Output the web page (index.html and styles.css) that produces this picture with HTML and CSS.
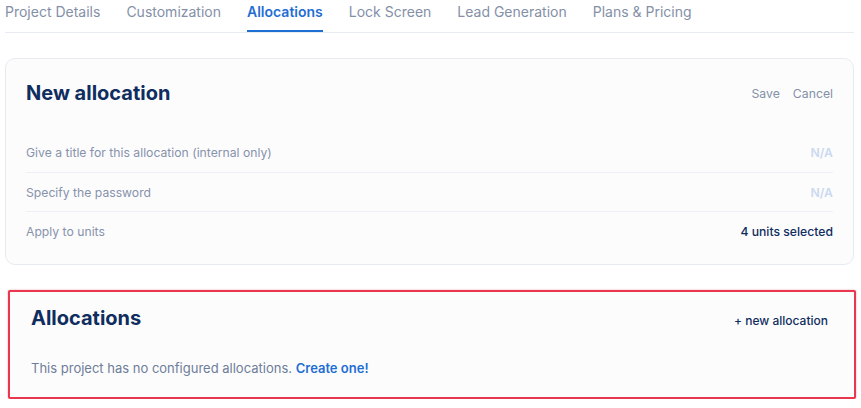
FILE: index.html
```html
<!DOCTYPE html>
<html lang="en">
  <head>
    <meta charset="UTF-8" />
    <title>Allocations</title>
    <link rel="stylesheet" href="styles.css">
  </head>
  <body>
    <nav class="tabs">
      <a class="tab">Project Details</a>
      <a class="tab">Customization</a>
      <a class="tab active">Allocations</a>
      <a class="tab">Lock Screen</a>
      <a class="tab">Lead Generation</a>
      <a class="tab">Plans &amp; Pricing</a>
    </nav>

    <section class="card">
      <div class="card-head">
        <h2>New allocation</h2>
        <div class="actions">
          <a>Save</a>
          <a>Cancel</a>
        </div>
      </div>
      <ul class="rows">
        <li><span class="label">Give a title for this allocation (internal only)</span><span class="value empty">N/A</span></li>
        <li><span class="label">Specify the password</span><span class="value empty">N/A</span></li>
        <li><span class="label">Apply to units</span><span class="value">4 units selected</span></li>
      </ul>
    </section>

    <section class="card list">
      <div class="card-head">
        <h2>Allocations</h2>
        <a class="add">+ new allocation</a>
      </div>
      <p class="empty-note">This project has no configured allocations. <a class="link">Create one!</a></p>
    </section>
  </body>
</html>
```

FILE: styles.css
```css
body {
  margin: 0;
  padding: 0 7px 0 5px;
  font-family: Inter, "Noto Sans", Arial, sans-serif;
  background: #fff;
  color: #0f2d5e;
}
a {
  cursor: pointer;
}
.tabs {
  display: flex;
  gap: 26px;
  border-bottom: 1px solid #e8ecf2;
}
.tab {
  font-size: 14px;
  line-height: 20px;
  padding-top: 2px;
  height: 28px;
  color: #8490a8;
  border-bottom: 2px solid transparent;
}
.tab.active {
  color: #1f6ed4;
  font-weight: 600;
  border-bottom-color: #1f6ed4;
}
.card {
  margin-top: 25px;
  border: 1px solid #e7ebf1;
  border-radius: 10px;
  background: #fcfcfd;
  padding: 22px 20px 14px;
}
.card-head {
  display: flex;
  justify-content: space-between;
  align-items: center;
}
h2 {
  margin: 0;
  font-size: 20px;
  line-height: 24px;
  font-weight: 700;
  color: #0f2d5e;
}
.actions {
  display: flex;
  gap: 13px;
  font-size: 12.25px;
  color: #8490a8;
}
.rows {
  list-style: none;
  margin: 28px 0 0;
  padding: 0;
}
.rows li {
  display: flex;
  justify-content: space-between;
  align-items: center;
  height: 39px;
  font-size: 12.2px;
}
.rows li + li {
  border-top: 1px solid #edf0f4;
  height: 38px;
}
.label {
  color: #8792ab;
}
.value {
  font-weight: 500;
  color: #0f2d5e;
}
.value.empty {
  color: #cbd9ef;
  font-weight: 600;
}
.card.list {
  margin: 25px -2px 0 3px;
  border: 2px solid #e8374f;
  border-radius: 2px;
  background: #fcfcfc;
  padding: 14px 26px 20px 21px;
  box-shadow: 0 0 2px rgba(232, 55, 79, 0.5);
}
.add {
  font-size: 12px;
  font-weight: 500;
  color: #0f2d5e;
  margin-top: 4px;
}
.empty-note {
  margin: 29px 0 0;
  font-size: 13px;
  line-height: 18px;
  color: #6e7d9a;
}
.link {
  color: #1f6ed4;
  font-weight: 600;
}
```
